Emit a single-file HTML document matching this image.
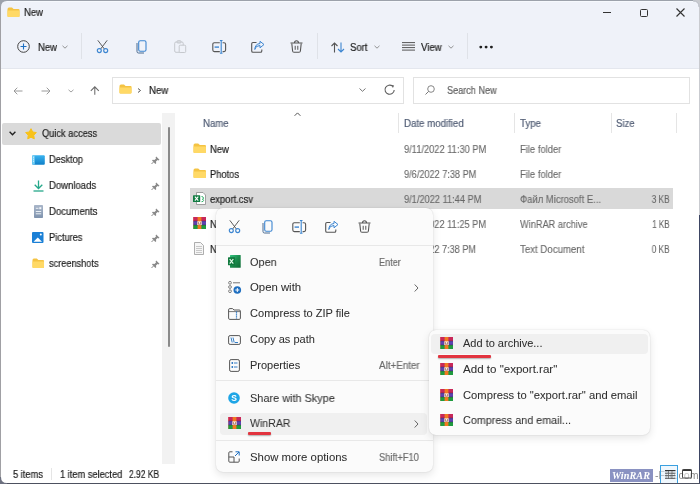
<!DOCTYPE html>
<html><head><meta charset="utf-8"><style>
html,body{margin:0;padding:0;}
body{width:700px;height:484px;position:relative;overflow:hidden;background:#fff;font-family:"Liberation Sans",sans-serif;}
.t{position:absolute;white-space:nowrap;line-height:1;-webkit-text-stroke:0.18px currentColor;will-change:transform;}
svg{overflow:visible;}
</style></head><body>
<div style="position:absolute;left:0px;top:0px;width:700px;height:68px;background:#eff2f9;"></div>
<div style="position:absolute;left:0px;top:68px;width:700px;height:1px;background:#e4e7ee;"></div>
<div style="position:absolute;left:0px;top:69px;width:700px;height:415px;background:#fff;"></div>
<svg style="position:absolute;left:7px;top:6.5px" width="13" height="10.5" viewBox="0 0 13 10.5" preserveAspectRatio="none"><path d="M0.5 2.2 Q0.5 0.5 2 0.5 H5 L6.6 2 H11.5 Q12.5 2 12.5 3 V9 Q12.5 10 11.5 10 H1.5 Q0.5 10 0.5 9 Z" fill="#f4c343"/><path d="M0.5 3.6 H12.5 V9 Q12.5 10 11.5 10 H1.5 Q0.5 10 0.5 9 Z" fill="#ffd966"/></svg>
<div class="t" style="left:24.00px;top:7.84px;font-size:10px;color:#1b1b1b;transform:scaleX(0.9488);transform-origin:0 0;">New</div>
<div style="position:absolute;left:603px;top:12px;width:8px;height:1px;background:#333;"></div>
<div style="position:absolute;left:639.5px;top:8.5px;width:8px;height:8px;border:1px solid #333;border-radius:1.5px;box-sizing:border-box;"></div>
<svg style="position:absolute;left:676px;top:8px" width="9" height="9" viewBox="0 0 9 9"><path d="M0.5 0.5 L8.5 8.5 M8.5 0.5 L0.5 8.5" stroke="#333" stroke-width="1.1"/></svg>
<svg style="position:absolute;left:17px;top:40px" width="13" height="13" viewBox="0 0 13 13"><circle cx="6.5" cy="6.5" r="5.8" fill="none" stroke="#444" stroke-width="1"/><path d="M6.5 3.5 V9.5 M3.5 6.5 H9.5" stroke="#1f6fc0" stroke-width="1.1"/></svg>
<div class="t" style="left:37.90px;top:42.83px;font-size:10px;color:#1b1b1b;transform:scaleX(0.9488);transform-origin:0 0;">New</div>
<svg style="position:absolute;left:62px;top:45px" width="6" height="4" viewBox="0 0 6 4"><path d="M0.5 0.8 L3 3.2 L5.5 0.8" fill="none" stroke="#888" stroke-width="0.9"/></svg>
<div style="position:absolute;left:81px;top:33px;width:1px;height:26px;background:#dfe2e8;"></div>
<svg style="position:absolute;left:96px;top:40px" width="13" height="13" viewBox="0 0 13 13"><path d="M1.8 0.3 L8.4 9 M11.2 0.3 L4.6 9" stroke="#4a4a4a" stroke-width="0.9"/><circle cx="3.3" cy="10.6" r="2" fill="none" stroke="#3d86d1" stroke-width="1.15"/><circle cx="9.7" cy="10.6" r="2" fill="none" stroke="#3d86d1" stroke-width="1.15"/></svg>
<svg style="position:absolute;left:135px;top:40px" width="12" height="14" viewBox="0 0 12 14"><path d="M2 3 V11.5 Q2 13 3.5 13 H9" fill="none" stroke="#4a6a8f" stroke-width="1"/><rect x="3.7" y="0.8" width="7.3" height="10.5" rx="1.5" fill="none" stroke="#3d86d1" stroke-width="1.1"/></svg>
<svg style="position:absolute;left:173.5px;top:40px" width="13" height="13" viewBox="0 0 13 13"><rect x="0.7" y="2" width="8.5" height="10.3" rx="1.3" fill="none" stroke="#c5c8cd" stroke-width="1"/><rect x="3" y="0.7" width="4" height="2.3" rx="0.8" fill="none" stroke="#c5c8cd" stroke-width="1"/><rect x="5.2" y="5.2" width="6.5" height="7.3" rx="1" fill="#eff2f9" stroke="#c5c8cd" stroke-width="1"/></svg>
<svg style="position:absolute;left:211.5px;top:39.5px" width="15" height="14" viewBox="0 0 15 14"><path d="M7.8 2.7 H2.4 Q0.8 2.7 0.8 4.3 V10 Q0.8 11.6 2.4 11.6 H7.8 M10.6 2.7 H12 Q13.6 2.7 13.6 4.3 V10 Q13.6 11.6 12 11.6 H10.6" fill="none" stroke="#555" stroke-width="1.1"/><path d="M2.6 7.1 H7" stroke="#3d86d1" stroke-width="1.4"/><path d="M9.2 0.3 V13.4 M7.9 0.5 H10.5 M7.9 13.2 H10.5" stroke="#3d86d1" stroke-width="1.1"/></svg>
<svg style="position:absolute;left:251px;top:41px" width="14" height="12" viewBox="0 0 14 12"><path d="M5.5 1.5 H2 Q0.7 1.5 0.7 2.8 V10 Q0.7 11.3 2 11.3 H9.5 Q10.8 11.3 10.8 10 V8.5" fill="none" stroke="#555" stroke-width="1.1"/><path d="M3.8 8.5 Q4.5 4.5 9 4.5 V6.8 L13 3.5 L9 0.3 V2.5 Q4 3 3.8 8.5 Z" fill="none" stroke="#3d86d1" stroke-width="1"/></svg>
<svg style="position:absolute;left:290px;top:40px" width="13" height="13" viewBox="0 0 13 13"><path d="M0.5 3 H12.5 M4.5 2.8 Q4.5 0.7 6.5 0.7 Q8.5 0.7 8.5 2.8" fill="none" stroke="#555" stroke-width="1.1"/><path d="M1.8 3.5 L2.6 11 Q2.8 12.3 4 12.3 H9 Q10.2 12.3 10.4 11 L11.2 3.5" fill="none" stroke="#555" stroke-width="1.1"/><path d="M5.2 5.8 V9.8 M7.8 5.8 V9.8" stroke="#555" stroke-width="1"/></svg>
<div style="position:absolute;left:317px;top:33px;width:1px;height:26px;background:#dfe2e8;"></div>
<svg style="position:absolute;left:330.5px;top:41.5px" width="14" height="11" viewBox="0 0 14 11"><path d="M3.5 10.5 V1 M0.5 4 L3.5 1 L6.5 4" fill="none" stroke="#555" stroke-width="1.1"/><path d="M10 0.5 V10 M7 7 L10 10 L13 7" fill="none" stroke="#3d86d1" stroke-width="1.1"/></svg>
<div class="t" style="left:350.40px;top:42.83px;font-size:10px;color:#1b1b1b;transform:scaleX(0.9537);transform-origin:0 0;">Sort</div>
<svg style="position:absolute;left:374px;top:45px" width="6" height="4" viewBox="0 0 6 4"><path d="M0.5 0.8 L3 3.2 L5.5 0.8" fill="none" stroke="#888" stroke-width="0.9"/></svg>
<svg style="position:absolute;left:402px;top:42px" width="13" height="9" viewBox="0 0 13 9"><path d="M0 0.6 H13 M0 3.1 H13 M0 5.6 H13 M0 8.1 H13" stroke="#555" stroke-width="1"/></svg>
<div class="t" style="left:421.40px;top:42.83px;font-size:10px;color:#1b1b1b;transform:scaleX(0.9617);transform-origin:0 0;">View</div>
<svg style="position:absolute;left:447.5px;top:45px" width="6" height="4" viewBox="0 0 6 4"><path d="M0.5 0.8 L3 3.2 L5.5 0.8" fill="none" stroke="#888" stroke-width="0.9"/></svg>
<div style="position:absolute;left:466.5px;top:33px;width:1px;height:26px;background:#dfe2e8;"></div>
<svg style="position:absolute;left:478px;top:44px" width="16" height="6" viewBox="0 0 16 6"><circle cx="2.8" cy="3.1" r="1.45" fill="#1e1e1e"/><circle cx="8.1" cy="3.1" r="1.45" fill="#1e1e1e"/><circle cx="13.4" cy="3.1" r="1.45" fill="#1e1e1e"/></svg>
<svg style="position:absolute;left:12.5px;top:86.5px" width="10" height="8" viewBox="0 0 10 8"><path d="M9.5 4 H1 M4.3 0.7 L1 4 L4.3 7.3" fill="none" stroke="#9a9a9a" stroke-width="1"/></svg>
<svg style="position:absolute;left:41px;top:86.5px" width="10" height="8" viewBox="0 0 10 8"><path d="M0.5 4 H9 M5.7 0.7 L9 4 L5.7 7.3" fill="none" stroke="#9a9a9a" stroke-width="1"/></svg>
<svg style="position:absolute;left:68px;top:88.5px" width="6" height="4" viewBox="0 0 6 4"><path d="M0.5 0.8 L3 3 L5.5 0.8" fill="none" stroke="#999" stroke-width="0.9"/></svg>
<svg style="position:absolute;left:89.5px;top:86px" width="10" height="9" viewBox="0 0 10 9"><path d="M4.8 8.7 V1 M0.8 4.8 L4.8 0.8 L8.8 4.8" fill="none" stroke="#6a6a6a" stroke-width="1.05"/></svg>
<div style="position:absolute;left:111.5px;top:76.5px;width:292px;height:27px;border:1px solid #e2e2e2;box-sizing:border-box;background:#fff;"></div>
<svg style="position:absolute;left:118.5px;top:84px" width="13" height="10" viewBox="0 0 13 10.5" preserveAspectRatio="none"><path d="M0.5 2.2 Q0.5 0.5 2 0.5 H5 L6.6 2 H11.5 Q12.5 2 12.5 3 V9 Q12.5 10 11.5 10 H1.5 Q0.5 10 0.5 9 Z" fill="#f4c343"/><path d="M0.5 3.6 H12.5 V9 Q12.5 10 11.5 10 H1.5 Q0.5 10 0.5 9 Z" fill="#ffd966"/></svg>
<svg style="position:absolute;left:136.5px;top:88px" width="5" height="5" viewBox="0 0 5 5"><path d="M1 0.5 L3.5 2.5 L1 4.5" fill="none" stroke="#444" stroke-width="0.9"/></svg>
<div class="t" style="left:148.60px;top:85.63px;font-size:10px;color:#1b1b1b;transform:scaleX(0.9638);transform-origin:0 0;">New</div>
<svg style="position:absolute;left:359px;top:88px" width="7" height="4" viewBox="0 0 7 4"><path d="M0.5 0.5 L3.5 3.3 L6.5 0.5" fill="none" stroke="#666" stroke-width="0.9"/></svg>
<svg style="position:absolute;left:383.5px;top:84px" width="12" height="11" viewBox="0 0 12 11"><path d="M10.2 5.9 A4.6 4.6 0 1 1 8.6 2.2" fill="none" stroke="#5e5e5e" stroke-width="1.1"/><path d="M7.4 0.9 L10.1 1.5 L8.9 4.0 Z" fill="#5e5e5e"/></svg>
<div style="position:absolute;left:413px;top:76.5px;width:277px;height:27px;border:1px solid #e2e2e2;box-sizing:border-box;background:#fff;"></div>
<svg style="position:absolute;left:425px;top:85px" width="10" height="10" viewBox="0 0 10 10"><circle cx="6" cy="4" r="3.3" fill="none" stroke="#777" stroke-width="0.9"/><path d="M3.6 6.4 L0.5 9.5" stroke="#777" stroke-width="1"/></svg>
<div class="t" style="left:446.80px;top:85.63px;font-size:10px;color:#5d5d5d;transform:scaleX(0.9119);transform-origin:0 0;">Search New</div>
<div style="position:absolute;left:2px;top:123px;width:159px;height:21.5px;background:#dadada;border-radius:2px;"></div>
<svg style="position:absolute;left:9px;top:131px" width="7" height="5" viewBox="0 0 7 5"><path d="M0.6 0.8 L3.5 3.7 L6.4 0.8" fill="none" stroke="#222" stroke-width="1.35"/></svg>
<svg style="position:absolute;left:25.3px;top:128.3px" width="12" height="12" viewBox="0 0 12 12"><path d="M6.00 0.70 L7.70 3.95 L11.33 4.57 L8.76 7.20 L9.29 10.83 L6.00 9.20 L2.71 10.83 L3.24 7.20 L0.67 4.57 L4.30 3.95 Z" fill="#f8c21a" stroke="#f8c21a" stroke-width="1" stroke-linejoin="round"/></svg>
<div class="t" style="left:41.80px;top:128.84px;font-size:10px;color:#1b1b1b;transform:scaleX(0.9248);transform-origin:0 0;">Quick access</div>
<div style="position:absolute;left:162px;top:113px;width:13px;height:351px;background:#f2f2f2;"></div>
<div style="position:absolute;left:168px;top:126.5px;width:2px;height:220.5px;background:#8a8a8a;border-radius:1px;"></div>
<div class="t" style="left:48.80px;top:154.84px;font-size:10px;color:#1b1b1b;transform:scaleX(0.9271);transform-origin:0 0;">Desktop</div>
<svg style="position:absolute;left:151px;top:155.8px" width="9" height="9" viewBox="0 0 9 9"><path d="M5.2 0.5 L8.5 3.8 L7.5 4.4 L6.6 4 L5 5.6 L5.2 7.2 L4.4 8 L1 4.6 L1.8 3.8 L3.4 4 L5 2.4 L4.6 1.5 Z" fill="#8a8a8a"/><path d="M2.5 6 L0.5 8" stroke="#8a8a8a" stroke-width="1"/></svg>
<div class="t" style="left:48.80px;top:180.84px;font-size:10px;color:#1b1b1b;transform:scaleX(0.9520);transform-origin:0 0;">Downloads</div>
<svg style="position:absolute;left:151px;top:181.8px" width="9" height="9" viewBox="0 0 9 9"><path d="M5.2 0.5 L8.5 3.8 L7.5 4.4 L6.6 4 L5 5.6 L5.2 7.2 L4.4 8 L1 4.6 L1.8 3.8 L3.4 4 L5 2.4 L4.6 1.5 Z" fill="#8a8a8a"/><path d="M2.5 6 L0.5 8" stroke="#8a8a8a" stroke-width="1"/></svg>
<div class="t" style="left:48.80px;top:206.84px;font-size:10px;color:#1b1b1b;transform:scaleX(0.9590);transform-origin:0 0;">Documents</div>
<svg style="position:absolute;left:151px;top:207.8px" width="9" height="9" viewBox="0 0 9 9"><path d="M5.2 0.5 L8.5 3.8 L7.5 4.4 L6.6 4 L5 5.6 L5.2 7.2 L4.4 8 L1 4.6 L1.8 3.8 L3.4 4 L5 2.4 L4.6 1.5 Z" fill="#8a8a8a"/><path d="M2.5 6 L0.5 8" stroke="#8a8a8a" stroke-width="1"/></svg>
<div class="t" style="left:48.80px;top:232.84px;font-size:10px;color:#1b1b1b;transform:scaleX(0.9273);transform-origin:0 0;">Pictures</div>
<svg style="position:absolute;left:151px;top:233.8px" width="9" height="9" viewBox="0 0 9 9"><path d="M5.2 0.5 L8.5 3.8 L7.5 4.4 L6.6 4 L5 5.6 L5.2 7.2 L4.4 8 L1 4.6 L1.8 3.8 L3.4 4 L5 2.4 L4.6 1.5 Z" fill="#8a8a8a"/><path d="M2.5 6 L0.5 8" stroke="#8a8a8a" stroke-width="1"/></svg>
<div class="t" style="left:48.80px;top:258.84px;font-size:10px;color:#1b1b1b;transform:scaleX(0.9179);transform-origin:0 0;">screenshots</div>
<svg style="position:absolute;left:151px;top:259.8px" width="9" height="9" viewBox="0 0 9 9"><path d="M5.2 0.5 L8.5 3.8 L7.5 4.4 L6.6 4 L5 5.6 L5.2 7.2 L4.4 8 L1 4.6 L1.8 3.8 L3.4 4 L5 2.4 L4.6 1.5 Z" fill="#8a8a8a"/><path d="M2.5 6 L0.5 8" stroke="#8a8a8a" stroke-width="1"/></svg>
<svg style="position:absolute;left:31.5px;top:155px" width="13" height="10" viewBox="0 0 13 10"><defs><linearGradient id="dg" x1="0" y1="0" x2="0" y2="1"><stop offset="0" stop-color="#3ab4f0"/><stop offset="1" stop-color="#0e7fc8"/></linearGradient></defs><rect x="0.2" y="0.2" width="12.6" height="9.6" rx="1" fill="url(#dg)"/><rect x="0.2" y="0.2" width="2.6" height="9.6" rx="0.8" fill="#6fcdf5"/><path d="M1 2.2 H2 M1 4.2 H2 M1 6.2 H2" stroke="#fff" stroke-width="0.8"/></svg>
<svg style="position:absolute;left:33px;top:180px" width="11" height="12" viewBox="0 0 11 12"><path d="M5.5 0.5 V8 M1.7 4.8 L5.5 8.5 L9.3 4.8" fill="none" stroke="#26a88a" stroke-width="1.3"/><path d="M0.5 11 H10.5" stroke="#26a88a" stroke-width="1.3"/></svg>
<svg style="position:absolute;left:34px;top:205px" width="9" height="13" viewBox="0 0 9 13"><defs><linearGradient id="docg" x1="0" y1="0" x2="0" y2="1"><stop offset="0" stop-color="#a9b6c9"/><stop offset="1" stop-color="#7f93ae"/></linearGradient></defs><rect x="0" y="0" width="9" height="13" rx="0.8" fill="url(#docg)"/><path d="M1.8 3.3 H4.5 M1.8 6.5 H7.2 M1.8 8.8 H7.2" stroke="#f4f7fb" stroke-width="0.9"/><rect x="5.3" y="2.2" width="2" height="2" fill="#f4f7fb"/></svg>
<svg style="position:absolute;left:32px;top:232px" width="11.5" height="11" viewBox="0 0 11.5 11"><rect x="0" y="0" width="11.5" height="11" rx="1" fill="#1b80d6"/><path d="M1.5 9.8 L5.8 5.5 L10 9.8 Z" fill="#fff"/><circle cx="8.8" cy="2.5" r="1" fill="#fff"/></svg>
<svg style="position:absolute;left:31.5px;top:257.5px" width="12.5" height="10.5" viewBox="0 0 13 10.5" preserveAspectRatio="none"><path d="M0.5 2.2 Q0.5 0.5 2 0.5 H5 L6.6 2 H11.5 Q12.5 2 12.5 3 V9 Q12.5 10 11.5 10 H1.5 Q0.5 10 0.5 9 Z" fill="#f4c343"/><path d="M0.5 3.6 H12.5 V9 Q12.5 10 11.5 10 H1.5 Q0.5 10 0.5 9 Z" fill="#ffd966"/></svg>
<div class="t" style="left:202.90px;top:118.83px;font-size:10px;color:#4f5b73;transform:scaleX(0.9634);transform-origin:0 0;">Name</div>
<svg style="position:absolute;left:294px;top:112.3px" width="7" height="5" viewBox="0 0 7 5"><path d="M0.6 3.8 L3.5 0.9 L6.4 3.8" fill="none" stroke="#555" stroke-width="1"/></svg>
<div style="position:absolute;left:397.5px;top:112.5px;width:1px;height:20px;background:#e5e5e5;"></div>
<div style="position:absolute;left:513.5px;top:112.5px;width:1px;height:20px;background:#e5e5e5;"></div>
<div style="position:absolute;left:610.5px;top:112.5px;width:1px;height:20px;background:#e5e5e5;"></div>
<div style="position:absolute;left:675.5px;top:112.5px;width:1px;height:20px;background:#e5e5e5;"></div>
<div class="t" style="left:403.60px;top:118.83px;font-size:10px;color:#4f5b73;transform:scaleX(0.9676);transform-origin:0 0;">Date modified</div>
<div class="t" style="left:519.80px;top:118.83px;font-size:10px;color:#4f5b73;transform:scaleX(0.9689);transform-origin:0 0;">Type</div>
<div class="t" style="left:616.20px;top:118.83px;font-size:10px;color:#4f5b73;transform:scaleX(0.9512);transform-origin:0 0;">Size</div>
<div style="position:absolute;left:190px;top:188px;width:482.5px;height:21px;background:#d9d9d9;"></div>
<div class="t" style="left:209.80px;top:144.53px;font-size:10px;color:#1b1b1b;transform:scaleX(0.9438);transform-origin:0 0;">New</div>
<div class="t" style="left:403.60px;top:144.53px;font-size:10px;color:#686868;transform:scaleX(0.9292);transform-origin:0 0;-webkit-text-stroke:0.1px currentColor;">9/11/2022 11:30 PM</div>
<div class="t" style="left:519.50px;top:144.53px;font-size:10px;color:#686868;transform:scaleX(0.9408);transform-origin:0 0;-webkit-text-stroke:0.1px currentColor;">File folder</div>
<div class="t" style="left:209.80px;top:169.53px;font-size:10px;color:#1b1b1b;transform:scaleX(0.9317);transform-origin:0 0;">Photos</div>
<div class="t" style="left:403.60px;top:169.53px;font-size:10px;color:#686868;transform:scaleX(0.9170);transform-origin:0 0;-webkit-text-stroke:0.1px currentColor;">9/6/2022 7:38 PM</div>
<div class="t" style="left:519.50px;top:169.53px;font-size:10px;color:#686868;transform:scaleX(0.9408);transform-origin:0 0;-webkit-text-stroke:0.1px currentColor;">File folder</div>
<div class="t" style="left:209.80px;top:194.53px;font-size:10px;color:#1b1b1b;transform:scaleX(0.9435);transform-origin:0 0;">export.csv</div>
<div class="t" style="left:403.60px;top:194.53px;font-size:10px;color:#686868;transform:scaleX(0.9239);transform-origin:0 0;-webkit-text-stroke:0.1px currentColor;">9/1/2022 11:44 PM</div>
<div class="t" style="left:519.50px;top:194.53px;font-size:10px;color:#686868;transform:scaleX(0.9452);transform-origin:0 0;-webkit-text-stroke:0.1px currentColor;">Файл Microsoft E...</div>
<div class="t" style="right:30.5px;top:194.53px;font-size:10px;color:#686868;transform:scaleX(0.8304);transform-origin:100% 0;-webkit-text-stroke:0.1px currentColor;">3 KB</div>
<div class="t" style="left:209.80px;top:219.53px;font-size:10px;color:#1b1b1b;transform:scaleX(0.9438);transform-origin:0 0;">New</div>
<div class="t" style="left:403.60px;top:219.53px;font-size:10px;color:#686868;transform:scaleX(0.9269);transform-origin:0 0;-webkit-text-stroke:0.1px currentColor;">9/11/2022 11:25 PM</div>
<div class="t" style="left:519.50px;top:219.53px;font-size:10px;color:#686868;transform:scaleX(0.9216);transform-origin:0 0;-webkit-text-stroke:0.1px currentColor;">WinRAR archive</div>
<div class="t" style="right:30.5px;top:219.53px;font-size:10px;color:#686868;transform:scaleX(0.8074);transform-origin:100% 0;-webkit-text-stroke:0.1px currentColor;">1 KB</div>
<div class="t" style="left:209.80px;top:244.53px;font-size:10px;color:#1b1b1b;transform:scaleX(0.9438);transform-origin:0 0;">New</div>
<div class="t" style="left:403.60px;top:244.53px;font-size:10px;color:#686868;transform:scaleX(0.9120);transform-origin:0 0;-webkit-text-stroke:0.1px currentColor;">9/1/2022 7:38 PM</div>
<div class="t" style="left:519.50px;top:244.53px;font-size:10px;color:#686868;transform:scaleX(0.9655);transform-origin:0 0;-webkit-text-stroke:0.1px currentColor;">Text Document</div>
<div class="t" style="right:30.5px;top:244.53px;font-size:10px;color:#686868;transform:scaleX(0.8304);transform-origin:100% 0;-webkit-text-stroke:0.1px currentColor;">0 KB</div>
<svg style="position:absolute;left:192.5px;top:143px" width="13.5" height="10.5" viewBox="0 0 13 10.5" preserveAspectRatio="none"><path d="M0.5 2.2 Q0.5 0.5 2 0.5 H5 L6.6 2 H11.5 Q12.5 2 12.5 3 V9 Q12.5 10 11.5 10 H1.5 Q0.5 10 0.5 9 Z" fill="#f4c343"/><path d="M0.5 3.6 H12.5 V9 Q12.5 10 11.5 10 H1.5 Q0.5 10 0.5 9 Z" fill="#ffd966"/></svg>
<svg style="position:absolute;left:192.5px;top:168px" width="13.5" height="10.5" viewBox="0 0 13 10.5" preserveAspectRatio="none"><path d="M0.5 2.2 Q0.5 0.5 2 0.5 H5 L6.6 2 H11.5 Q12.5 2 12.5 3 V9 Q12.5 10 11.5 10 H1.5 Q0.5 10 0.5 9 Z" fill="#f4c343"/><path d="M0.5 3.6 H12.5 V9 Q12.5 10 11.5 10 H1.5 Q0.5 10 0.5 9 Z" fill="#ffd966"/></svg>
<svg style="position:absolute;left:193px;top:192px" width="13" height="13" viewBox="0 0 13 13"><path d="M3.5 0.5 H10 L12.5 3 V12.5 H3.5 Z" fill="#fff" stroke="#8a8a8a" stroke-width="0.8"/><rect x="0" y="3.2" width="7.2" height="6.8" rx="0.6" fill="#107c41"/><path d="M1.9 4.7 L5.3 8.6 M5.3 4.7 L1.9 8.6" stroke="#fff" stroke-width="1.1"/><path d="M8.5 4.5 Q10.5 4.5 10.5 6.2 Q10.5 7.2 9.3 7.3 Q10.6 7.4 10.6 8.5 Q10.5 9.7 8.5 9.7" fill="none" stroke="#33b36b" stroke-width="1"/></svg>
<svg style="position:absolute;left:193px;top:217px" width="13" height="12" viewBox="0 0 13 12" preserveAspectRatio="none"><rect x="0" y="0" width="13" height="4" fill="#c8285a"/><rect x="0" y="4" width="13" height="4" fill="#5b44b0"/><rect x="0" y="8" width="13" height="4" fill="#1f9b3f"/><path d="M0 4 H13 M0 8 H13" stroke="#301830" stroke-width="0.6" opacity="0.6"/><rect x="4.6" y="0" width="3.8" height="12" fill="#f27a22"/><rect x="4.3" y="4.4" width="4.4" height="3.6" fill="#fbf2ea"/><path d="M5.3 5 V7.2 H7.7 V5" fill="none" stroke="#7a3020" stroke-width="0.6"/><path d="M0.4 0 V12" stroke="#ff9a70" stroke-width="0.6" opacity="0.6"/></svg>
<svg style="position:absolute;left:194px;top:242px" width="10" height="13" viewBox="0 0 10 13"><path d="M0.5 0.5 H6.5 L9.5 3.5 V12.5 H0.5 Z" fill="#f6f6f6" stroke="#9a9a9a" stroke-width="0.8"/><path d="M2 4.5 H8 M2 6.5 H8 M2 8.5 H8 M2 10.5 H8" stroke="#b5b5b5" stroke-width="0.7"/></svg>
<div class="t" style="left:12.60px;top:469.54px;font-size:10px;color:#1b1b1b;transform:scaleX(0.9279);transform-origin:0 0;">5 items</div>
<div style="position:absolute;left:51px;top:468px;width:1px;height:12px;background:#e5e5e5;"></div>
<div class="t" style="left:60.20px;top:469.54px;font-size:10px;color:#1b1b1b;transform:scaleX(0.9264);transform-origin:0 0;">1 item selected</div>
<div class="t" style="left:128.50px;top:469.54px;font-size:10px;color:#1b1b1b;transform:scaleX(0.8433);transform-origin:0 0;">2.92 KB</div>
<div style="position:absolute;background:#fbfbfb;border-radius:7px;box-shadow:0 3px 9px rgba(0,0,0,0.11),0 0 1.5px rgba(0,0,0,0.18);left:216px;top:208px;width:216.5px;height:264px;"></div>
<svg style="position:absolute;left:228px;top:220px" width="13" height="13" viewBox="0 0 13 13"><path d="M1.8 0.3 L8.4 9 M11.2 0.3 L4.6 9" stroke="#4a4a4a" stroke-width="0.9"/><circle cx="3.3" cy="10.6" r="2" fill="none" stroke="#3d86d1" stroke-width="1.15"/><circle cx="9.7" cy="10.6" r="2" fill="none" stroke="#3d86d1" stroke-width="1.15"/></svg>
<svg style="position:absolute;left:261px;top:220px" width="12" height="14" viewBox="0 0 12 14"><path d="M2 3 V11.5 Q2 13 3.5 13 H9" fill="none" stroke="#4a6a8f" stroke-width="1"/><rect x="3.7" y="0.8" width="7.3" height="10.5" rx="1.5" fill="none" stroke="#3d86d1" stroke-width="1.1"/></svg>
<svg style="position:absolute;left:292px;top:219.5px" width="15" height="14" viewBox="0 0 15 14"><path d="M7.8 2.7 H2.4 Q0.8 2.7 0.8 4.3 V10 Q0.8 11.6 2.4 11.6 H7.8 M10.6 2.7 H12 Q13.6 2.7 13.6 4.3 V10 Q13.6 11.6 12 11.6 H10.6" fill="none" stroke="#555" stroke-width="1.1"/><path d="M2.6 7.1 H7" stroke="#3d86d1" stroke-width="1.4"/><path d="M9.2 0.3 V13.4 M7.9 0.5 H10.5 M7.9 13.2 H10.5" stroke="#3d86d1" stroke-width="1.1"/></svg>
<svg style="position:absolute;left:324.5px;top:221px" width="14" height="12" viewBox="0 0 14 12"><path d="M5.5 1.5 H2 Q0.7 1.5 0.7 2.8 V10 Q0.7 11.3 2 11.3 H9.5 Q10.8 11.3 10.8 10 V8.5" fill="none" stroke="#555" stroke-width="1.1"/><path d="M3.8 8.5 Q4.5 4.5 9 4.5 V6.8 L13 3.5 L9 0.3 V2.5 Q4 3 3.8 8.5 Z" fill="none" stroke="#3d86d1" stroke-width="1"/></svg>
<svg style="position:absolute;left:357.5px;top:220px" width="13" height="13" viewBox="0 0 13 13"><path d="M0.5 3 H12.5 M4.5 2.8 Q4.5 0.7 6.5 0.7 Q8.5 0.7 8.5 2.8" fill="none" stroke="#555" stroke-width="1.1"/><path d="M1.8 3.5 L2.6 11 Q2.8 12.3 4 12.3 H9 Q10.2 12.3 10.4 11 L11.2 3.5" fill="none" stroke="#555" stroke-width="1.1"/><path d="M5.2 5.8 V9.8 M7.8 5.8 V9.8" stroke="#555" stroke-width="1"/></svg>
<div style="position:absolute;left:216px;top:245px;width:216.5px;height:1px;background:#e8e8e8;"></div>
<div style="position:absolute;left:216px;top:380px;width:216.5px;height:1px;background:#e8e8e8;"></div>
<div style="position:absolute;left:216px;top:439.5px;width:216.5px;height:1px;background:#e8e8e8;"></div>
<div style="position:absolute;left:220px;top:412.5px;width:206.5px;height:22px;background:#f0f0f0;border-radius:4px;"></div>
<div class="t" style="left:249.50px;top:256.99px;font-size:11px;color:#2e2e2e;transform:scaleX(0.9917);transform-origin:0 0;-webkit-text-stroke:0.05px currentColor;">Open</div>
<div class="t" style="left:379.10px;top:257.84px;font-size:10px;color:#6b6b6b;transform:scaleX(0.9121);transform-origin:0 0;">Enter</div>
<div class="t" style="left:249.50px;top:281.99px;font-size:11px;color:#2e2e2e;transform:scaleX(1.0318);transform-origin:0 0;-webkit-text-stroke:0.05px currentColor;">Open with</div>
<div class="t" style="left:249.50px;top:307.99px;font-size:11px;color:#2e2e2e;transform:scaleX(1.0046);transform-origin:0 0;-webkit-text-stroke:0.05px currentColor;">Compress to ZIP file</div>
<div class="t" style="left:249.50px;top:333.99px;font-size:11px;color:#2e2e2e;-webkit-text-stroke:0.05px currentColor;">Copy as path</div>
<div class="t" style="left:249.50px;top:359.99px;font-size:11px;color:#2e2e2e;-webkit-text-stroke:0.05px currentColor;">Properties</div>
<div class="t" style="left:379.10px;top:360.84px;font-size:10px;color:#6b6b6b;transform:scaleX(0.9831);transform-origin:0 0;">Alt+Enter</div>
<div class="t" style="left:249.50px;top:392.99px;font-size:11px;color:#2e2e2e;transform:scaleX(0.9917);transform-origin:0 0;-webkit-text-stroke:0.05px currentColor;">Share with Skype</div>
<div class="t" style="left:249.50px;top:418.49px;font-size:11px;color:#2e2e2e;transform:scaleX(0.9583);transform-origin:0 0;-webkit-text-stroke:0.05px currentColor;">WinRAR</div>
<div class="t" style="left:249.50px;top:451.99px;font-size:11px;color:#2e2e2e;transform:scaleX(1.0323);transform-origin:0 0;-webkit-text-stroke:0.05px currentColor;">Show more options</div>
<div class="t" style="left:379.10px;top:452.84px;font-size:10px;color:#6b6b6b;transform:scaleX(0.9240);transform-origin:0 0;">Shift+F10</div>
<svg style="position:absolute;left:228px;top:255px" width="13" height="13" viewBox="0 0 13 13"><defs><linearGradient id="xg" x1="0" y1="0" x2="1" y2="1"><stop offset="0" stop-color="#33c481"/><stop offset="0.5" stop-color="#1a8a4c"/><stop offset="1" stop-color="#0f6b35"/></linearGradient></defs><rect x="2" y="0" width="10.7" height="12.8" rx="0.5" fill="url(#xg)"/><rect x="0" y="2.3" width="7" height="8" rx="0.5" fill="#117a3e"/><path d="M1.7 4 L5.3 8.6 M5.3 4 L1.7 8.6" stroke="#e8fff0" stroke-width="1.2"/></svg>
<svg style="position:absolute;left:227.5px;top:281px" width="14" height="13" viewBox="0 0 14 13"><circle cx="2" cy="1.8" r="1.4" fill="none" stroke="#666" stroke-width="0.8"/><circle cx="2" cy="6" r="1.4" fill="none" stroke="#666" stroke-width="0.8"/><circle cx="2" cy="10.2" r="1.4" fill="none" stroke="#666" stroke-width="0.8"/><path d="M5 1.8 H12" stroke="#666" stroke-width="0.9"/><circle cx="9.3" cy="9" r="3.8" fill="#1f6fc0"/><path d="M9.3 7 V11 M7.3 9 H11.3" stroke="#fff" stroke-width="1"/></svg>
<svg style="position:absolute;left:227.5px;top:307.5px" width="13" height="12" viewBox="0 0 13 12"><path d="M0.6 1.8 Q0.6 0.6 1.8 0.6 H4.5 L6 2 H11.2 Q12.4 2 12.4 3.2 V10.2 Q12.4 11.4 11.2 11.4 H1.8 Q0.6 11.4 0.6 10.2 Z" fill="none" stroke="#555" stroke-width="1"/><path d="M0.6 3.6 H12.4" stroke="#555" stroke-width="0.8"/><path d="M8.5 3.5 V10.5" stroke="#1f6fc0" stroke-width="1.2" stroke-dasharray="1.2 0.8"/></svg>
<svg style="position:absolute;left:227.5px;top:334.5px" width="13" height="10" viewBox="0 0 13 10"><rect x="0.6" y="0.6" width="11.8" height="8.8" rx="1.5" fill="none" stroke="#555" stroke-width="1"/><path d="M3 2.5 L4.2 7.5 M5 2.5 L6.2 7.5 M7 7.5 H10" stroke="#1f6fc0" stroke-width="0.9"/></svg>
<svg style="position:absolute;left:229px;top:358.5px" width="11" height="13" viewBox="0 0 11 13"><rect x="0.6" y="0.6" width="9.8" height="11.8" rx="1.5" fill="none" stroke="#555" stroke-width="1"/><circle cx="3.3" cy="4" r="0.9" fill="#1f6fc0"/><circle cx="3.3" cy="8" r="0.9" fill="#1f6fc0"/><path d="M5 4 H8.5 M5 8 H8.5" stroke="#1f6fc0" stroke-width="0.9"/></svg>
<svg style="position:absolute;left:228px;top:392px" width="12" height="12" viewBox="0 0 12 12"><circle cx="6" cy="6" r="5.8" fill="#1ea5e6"/><text x="6" y="9.2" font-size="8.5" font-weight="bold" text-anchor="middle" fill="#fff" font-family="Liberation Sans">S</text></svg>
<svg style="position:absolute;left:228px;top:417px" width="13" height="12" viewBox="0 0 13 12" preserveAspectRatio="none"><rect x="0" y="0" width="13" height="4" fill="#c8285a"/><rect x="0" y="4" width="13" height="4" fill="#5b44b0"/><rect x="0" y="8" width="13" height="4" fill="#1f9b3f"/><path d="M0 4 H13 M0 8 H13" stroke="#301830" stroke-width="0.6" opacity="0.6"/><rect x="4.6" y="0" width="3.8" height="12" fill="#f27a22"/><rect x="4.3" y="4.4" width="4.4" height="3.6" fill="#fbf2ea"/><path d="M5.3 5 V7.2 H7.7 V5" fill="none" stroke="#7a3020" stroke-width="0.6"/><path d="M0.4 0 V12" stroke="#ff9a70" stroke-width="0.6" opacity="0.6"/></svg>
<svg style="position:absolute;left:228px;top:451px" width="12" height="12" viewBox="0 0 12 12"><path d="M4.5 0.8 H1.8 Q0.8 0.8 0.8 1.8 V10.2 Q0.8 11.2 1.8 11.2 H10.2 Q11.2 11.2 11.2 10.2 V7.5" fill="none" stroke="#555" stroke-width="1"/><path d="M0.8 6 H6 V11.2" fill="none" stroke="#555" stroke-width="1"/><path d="M7 5 L11 1 M7.5 0.8 H11.2 V4.5" fill="none" stroke="#1f6fc0" stroke-width="1"/></svg>
<svg style="position:absolute;left:413.5px;top:283.5px" width="5" height="8" viewBox="0 0 5 8"><path d="M0.7 0.5 L4 4 L0.7 7.5" fill="none" stroke="#555" stroke-width="0.9"/></svg>
<svg style="position:absolute;left:413.5px;top:420px" width="5" height="8" viewBox="0 0 5 8"><path d="M0.7 0.5 L4 4 L0.7 7.5" fill="none" stroke="#555" stroke-width="0.9"/></svg>
<div style="position:absolute;left:248px;top:432px;width:22.5px;height:3px;background:#e2343f;border-radius:1px;box-shadow:0 1px 1.5px rgba(0,0,0,0.3);"></div>
<div style="position:absolute;background:#fbfbfb;border-radius:7px;box-shadow:0 3px 9px rgba(0,0,0,0.11),0 0 1.5px rgba(0,0,0,0.18);left:428.5px;top:329.5px;width:221px;height:105.5px;"></div>
<div style="position:absolute;left:431px;top:334px;width:216.5px;height:20px;background:#f0f0f0;border-radius:4px;"></div>
<div class="t" style="left:462.90px;top:338.49px;font-size:11px;color:#2e2e2e;transform:scaleX(1.0000);transform-origin:0 0;-webkit-text-stroke:0.05px currentColor;">Add to archive...</div>
<svg style="position:absolute;left:440px;top:337.1px" width="13" height="12" viewBox="0 0 13 12" preserveAspectRatio="none"><rect x="0" y="0" width="13" height="4" fill="#c8285a"/><rect x="0" y="4" width="13" height="4" fill="#5b44b0"/><rect x="0" y="8" width="13" height="4" fill="#1f9b3f"/><path d="M0 4 H13 M0 8 H13" stroke="#301830" stroke-width="0.6" opacity="0.6"/><rect x="4.6" y="0" width="3.8" height="12" fill="#f27a22"/><rect x="4.3" y="4.4" width="4.4" height="3.6" fill="#fbf2ea"/><path d="M5.3 5 V7.2 H7.7 V5" fill="none" stroke="#7a3020" stroke-width="0.6"/><path d="M0.4 0 V12" stroke="#ff9a70" stroke-width="0.6" opacity="0.6"/></svg>
<div class="t" style="left:462.90px;top:363.99px;font-size:11px;color:#2e2e2e;transform:scaleX(1.0509);transform-origin:0 0;-webkit-text-stroke:0.05px currentColor;">Add to &quot;export.rar&quot;</div>
<svg style="position:absolute;left:440px;top:362.6px" width="13" height="12" viewBox="0 0 13 12" preserveAspectRatio="none"><rect x="0" y="0" width="13" height="4" fill="#c8285a"/><rect x="0" y="4" width="13" height="4" fill="#5b44b0"/><rect x="0" y="8" width="13" height="4" fill="#1f9b3f"/><path d="M0 4 H13 M0 8 H13" stroke="#301830" stroke-width="0.6" opacity="0.6"/><rect x="4.6" y="0" width="3.8" height="12" fill="#f27a22"/><rect x="4.3" y="4.4" width="4.4" height="3.6" fill="#fbf2ea"/><path d="M5.3 5 V7.2 H7.7 V5" fill="none" stroke="#7a3020" stroke-width="0.6"/><path d="M0.4 0 V12" stroke="#ff9a70" stroke-width="0.6" opacity="0.6"/></svg>
<div class="t" style="left:462.90px;top:389.99px;font-size:11px;color:#2e2e2e;transform:scaleX(1.0208);transform-origin:0 0;-webkit-text-stroke:0.05px currentColor;">Compress to &quot;export.rar&quot; and email</div>
<svg style="position:absolute;left:440px;top:388.6px" width="13" height="12" viewBox="0 0 13 12" preserveAspectRatio="none"><rect x="0" y="0" width="13" height="4" fill="#c8285a"/><rect x="0" y="4" width="13" height="4" fill="#5b44b0"/><rect x="0" y="8" width="13" height="4" fill="#1f9b3f"/><path d="M0 4 H13 M0 8 H13" stroke="#301830" stroke-width="0.6" opacity="0.6"/><rect x="4.6" y="0" width="3.8" height="12" fill="#f27a22"/><rect x="4.3" y="4.4" width="4.4" height="3.6" fill="#fbf2ea"/><path d="M5.3 5 V7.2 H7.7 V5" fill="none" stroke="#7a3020" stroke-width="0.6"/><path d="M0.4 0 V12" stroke="#ff9a70" stroke-width="0.6" opacity="0.6"/></svg>
<div class="t" style="left:462.90px;top:415.29px;font-size:11px;color:#2e2e2e;transform:scaleX(0.9813);transform-origin:0 0;-webkit-text-stroke:0.05px currentColor;">Compress and email...</div>
<svg style="position:absolute;left:440px;top:413.90000000000003px" width="13" height="12" viewBox="0 0 13 12" preserveAspectRatio="none"><rect x="0" y="0" width="13" height="4" fill="#c8285a"/><rect x="0" y="4" width="13" height="4" fill="#5b44b0"/><rect x="0" y="8" width="13" height="4" fill="#1f9b3f"/><path d="M0 4 H13 M0 8 H13" stroke="#301830" stroke-width="0.6" opacity="0.6"/><rect x="4.6" y="0" width="3.8" height="12" fill="#f27a22"/><rect x="4.3" y="4.4" width="4.4" height="3.6" fill="#fbf2ea"/><path d="M5.3 5 V7.2 H7.7 V5" fill="none" stroke="#7a3020" stroke-width="0.6"/><path d="M0.4 0 V12" stroke="#ff9a70" stroke-width="0.6" opacity="0.6"/></svg>
<div style="position:absolute;left:438px;top:354.5px;width:53px;height:3px;background:#e2343f;border-radius:1px;box-shadow:0 1px 1.5px rgba(0,0,0,0.3);"></div>
<div style="position:absolute;left:610px;top:469px;width:42.6px;height:13px;background:#8a92c2;"></div>
<div class="t" style="left:612px;top:468.6px;font-family:'Liberation Serif',serif;font-style:italic;font-weight:bold;font-size:10.2px;color:#fff;line-height:13px;-webkit-text-stroke:0;letter-spacing:0.1px;">WinRAR</div>
<div class="t" style="left:654.5px;top:468.8px;font-size:10.6px;color:#8a8a8a;line-height:13px;-webkit-text-stroke:0;">-File.com</div>
<div style="position:absolute;left:660.3px;top:464.7px;width:17.6px;height:19px;border:1px solid #3aa0e0;background:rgba(225,240,252,0.55);box-sizing:border-box;"></div>
<svg style="position:absolute;left:665px;top:470px" width="10.5" height="9" viewBox="0 0 10.5 9"><path d="M0 0.6 H10.5" stroke="#333" stroke-width="1.2"/><path d="M0 3.2 H10.5 M0 5.7 H10.5 M0 8.3 H10.5" stroke="#444" stroke-width="0.9"/><path d="M3.4 1 V8.5 M7 1 V8.5" stroke="#666" stroke-width="0.7"/></svg>
<svg style="position:absolute;left:681.7px;top:468.6px" width="10" height="9.5" viewBox="0 0 10 9.5"><rect x="0.5" y="0.5" width="9" height="8.5" rx="0.8" fill="rgba(255,255,255,0.5)" stroke="#333" stroke-width="0.9"/><path d="M0.5 1.3 H9.5" stroke="#333" stroke-width="1.4"/></svg>
<div style="position:absolute;left:0px;top:0px;width:700px;height:1px;background:#9ca2ab;"></div>
<div style="position:absolute;left:1px;top:1px;width:698px;height:1px;background:#f6f9fd;"></div>
<div style="position:absolute;left:0px;top:0px;width:1px;height:484px;background:#a0a0a4;"></div>
<div style="position:absolute;left:699px;top:0px;width:1px;height:215px;background:#c9cbd0;"></div>
<div style="position:absolute;left:699px;top:215px;width:1px;height:269px;background:#3d4563;"></div>
<div style="position:absolute;left:0px;top:483px;width:700px;height:1px;background:#4d5160;"></div>
<svg style="position:absolute;left:0px;top:477px" width="7" height="7" viewBox="0 0 7 7"><path d="M0 7 H7 V6 Q1 6 1 0 H0 Z" fill="#6d7180"/></svg>
<svg style="position:absolute;left:0px;top:0px" width="7" height="7" viewBox="0 0 7 7"><path d="M0 0 H7 V1 Q1 1 1 7 H0 Z" fill="#9ca2ab"/></svg>
<svg style="position:absolute;left:693px;top:0px" width="7" height="7" viewBox="0 0 7 7"><path d="M7 0 H0 V1 Q6 1 6 7 H7 Z" fill="#c9cbd0"/><path d="M0 1 Q6 1 6 7" fill="none" stroke="#b8bcc4" stroke-width="1"/></svg>
</body></html>
